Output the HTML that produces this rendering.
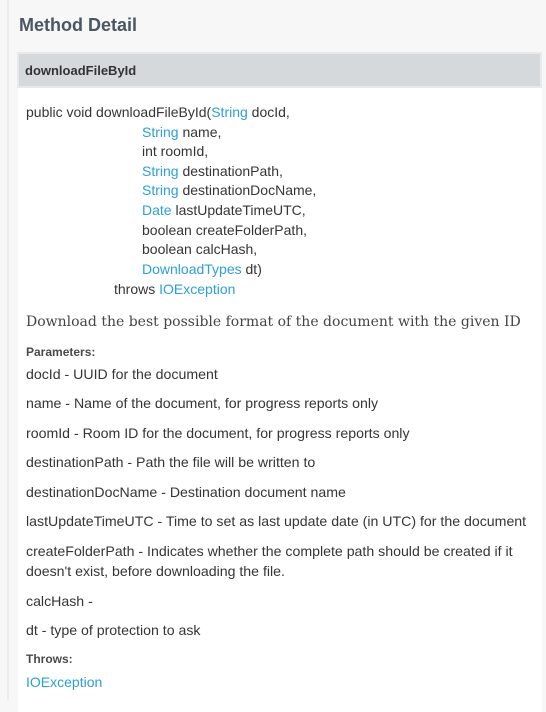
<!DOCTYPE html>
<html><head><style>
body{margin:0;width:546px;height:700px;background:#f7f7f7;position:relative;overflow:hidden;font-family:"Liberation Sans",sans-serif;color:#353535;}
.lb{position:absolute;left:7px;top:0;width:2px;height:700px;background:#ececec}
.panel{position:absolute;left:18px;top:52px;width:524px;height:660px;background:#fff}
.hd{position:absolute;left:17px;top:52px;width:521px;height:32px;background:#d6d9dc;border:2px solid #e9e9e9}
.t{position:absolute;white-space:nowrap;font-size:14px;line-height:18px}
.p{font-size:14.15px}
a{color:#2d9fdb;text-decoration:none}
</style></head><body>
<div class="lb"></div>
<div class="t" style="left:19px;top:14px;font-size:18px;line-height:22px;font-weight:bold;color:#4b5663">Method Detail</div>
<div class="panel"></div>
<div class="hd"></div>
<div class="t" style="left:25px;top:62px;font-size:13px;font-weight:bold;color:#333">downloadFileById</div>
<div class="t" style="left:26px;top:103px">public void downloadFileById(<a>String</a> docId,</div>
<div class="t" style="left:142px;top:123px"><a>String</a> name,</div>
<div class="t" style="left:142px;top:142px">int roomId,</div>
<div class="t" style="left:142px;top:162px"><a>String</a> destinationPath,</div>
<div class="t" style="left:142px;top:181px"><a>String</a> destinationDocName,</div>
<div class="t" style="left:142px;top:201px"><a>Date</a> lastUpdateTimeUTC,</div>
<div class="t" style="left:142px;top:221px">boolean createFolderPath,</div>
<div class="t" style="left:142px;top:240px">boolean calcHash,</div>
<div class="t" style="left:142px;top:260px"><a>DownloadTypes</a> dt)</div>
<div class="t" style="left:114px;top:280px">throws <a>IOException</a></div>
<div class="t" style="left:26px;top:313px;font-family:'DejaVu Serif','Liberation Serif',serif;font-size:14px;color:#444">Download the best possible format of the document with the given ID</div>
<div class="t" style="left:26px;top:343px;font-size:12px;font-weight:bold;color:#4a4a4a">Parameters:</div>
<div class="t p" style="left:26px;top:365px">docId - UUID for the document</div>
<div class="t p" style="left:26px;top:394px">name - Name of the document, for progress reports only</div>
<div class="t p" style="left:26px;top:424px">roomId - Room ID for the document, for progress reports only</div>
<div class="t p" style="left:26px;top:453px">destinationPath - Path the file will be written to</div>
<div class="t p" style="left:26px;top:483px">destinationDocName - Destination document name</div>
<div class="t p" style="left:26px;top:512px">lastUpdateTimeUTC - Time to set as last update date (in UTC) for the document</div>
<div class="t p" style="left:26px;top:542px">createFolderPath - Indicates whether the complete path should be created if it</div>
<div class="t p" style="left:26px;top:562px">doesn't exist, before downloading the file.</div>
<div class="t p" style="left:26px;top:592px">calcHash -</div>
<div class="t p" style="left:26px;top:621px">dt - type of protection to ask</div>
<div class="t" style="left:26px;top:650px;font-size:12px;font-weight:bold;color:#4a4a4a">Throws:</div>
<div class="t" style="left:26px;top:673px"><a>IOException</a></div>
</body></html>
